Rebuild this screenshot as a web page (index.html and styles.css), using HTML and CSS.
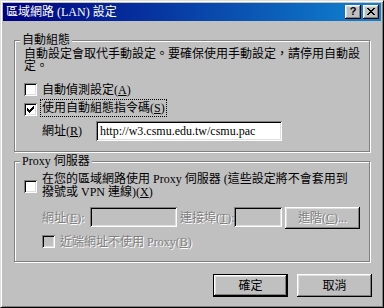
FILE: index.html
```html
<!DOCTYPE html>
<html lang="zh-Hant">
<head>
<meta charset="utf-8">
<title>區域網路 (LAN) 設定</title>
<link rel="stylesheet" href="styles.css">
</head>
<body>
<div class="window">
  <div class="titlebar">
    <span class="title">區域網路 (LAN) 設定</span>
    <div class="tbtns">
      <span class="tbtn help">?</span>
      <span class="tbtn close"><svg width="8" height="7" viewBox="0 0 8 7" shape-rendering="crispEdges"><path fill="#000" d="M0 0h2v1H0zM6 0h2v1H6zM1 1h2v1H1zM5 1h2v1H5zM2 2h4v1H2zM3 3h2v1H3zM2 4h4v1H2zM1 5h2v1H1zM5 5h2v1H5zM0 6h2v1H0zM6 6h2v1H6z"/></svg></span>
    </div>
  </div>
  <div class="content">
    <div class="group g1">
      <div class="legend">自動組態</div>
      <p class="desc">自動設定會取代手動設定。要確保使用手動設定，請停用自動設定。</p>
      <div class="check-row r1"><span class="cb"></span><span class="lbl">自動偵測設定(<u>A</u>)</span></div>
      <div class="check-row r2"><span class="cb"><svg class="tick" width="7" height="7" viewBox="0 0 7 7" shape-rendering="crispEdges"><path fill="#000" d="M6 0h1v1H6zM5 1h2v1H5zM0 2h1v1H0zM4 2h3v1H4zM0 3h2v1H0zM3 3h3v1H3zM0 4h5v1H0zM1 5h3v1H1zM2 6h1v1H2z"/></svg></span><span class="lbl focus">使用自動組態指令碼(<u>S</u>)</span></div>
      <div class="url-row"><span class="field-label">網址(<u>R</u>)</span><div class="input url">http://w3.csmu.edu.tw/csmu.pac</div></div>
    </div>
    <div class="group g2">
      <div class="legend">Proxy 伺服器</div>
      <div class="check-row r3"><span class="cb"></span><span class="lbl wrap">在您的區域網路使用 Proxy 伺服器 (這些設定將不會套用到撥號或 VPN 連線)(<u>X</u>)</span></div>
      <div class="proxy-row">
        <span class="dis lab-addr">網址(<u>E</u>):</span>
        <div class="input dis-input addr"></div>
        <span class="dis lab-port">連接埠(<u>T</u>):</span>
        <div class="input dis-input port"></div>
        <span class="btn adv"><span class="dis">進階(<u>C</u>)...</span></span>
      </div>
      <div class="check-row r4"><span class="cb dis-cb"></span><span class="lbl dis">近端網址不使用 Proxy(<u>B</u>)</span></div>
    </div>
    <div class="actions">
      <span class="btn default">確定</span>
      <span class="btn">取消</span>
    </div>
  </div>
</div>
</body>
</html>
```
FILE: styles.css
```css
html, body {
  margin: 0;
  padding: 0;
  background: #c0c0c0;
  overflow: hidden;
}
body {
  font-family: "Liberation Serif", "Noto Sans CJK TC", serif;
  font-size: 12px;
  line-height: 12px;
  color: #000;
}
u { text-decoration: underline; text-underline-offset: 1px; }

.window {
  width: 384px;
  height: 308px;
  box-sizing: border-box;
  border: 1px solid;
  border-color: #dfdfdf #000 #000 #dfdfdf;
  box-shadow: inset 1px 1px #fff, inset -1px -1px #808080;
  padding: 2px;
  background: #c0c0c0;
  display: flex;
  flex-direction: column;
}

.titlebar {
  height: 18px;
  flex: none;
  background: linear-gradient(90deg, #000080, #1084d0);
  color: #fff;
  display: flex;
  align-items: center;
  justify-content: space-between;
  padding: 0 2px 0 3px;
}
.title { white-space: nowrap; }
.tbtns { display: flex; gap: 2px; }
.tbtn {
  width: 16px;
  height: 14px;
  box-sizing: border-box;
  background: #c0c0c0;
  box-shadow: inset -1px -1px #000, inset 1px 1px #fff, inset -2px -2px #808080, inset 2px 2px #dfdfdf;
  display: flex;
  align-items: center;
  justify-content: center;
  color: #000;
}
.help {
  font: bold 11px/11px "Liberation Sans", sans-serif;
  padding-bottom: 1px;
}
.close svg { margin-top: -1px; }

.content {
  flex: 1;
  padding: 0 11px 0 11px;
  display: flex;
  flex-direction: column;
}

.group {
  border: 1px solid #808080;
  box-shadow: inset 1px 1px #fff, 1px 1px #fff;
  padding: 0 9px;
}
.g1 { margin-top: 19px; padding-bottom: 10px; }
.g2 { margin-top: 9px; padding-bottom: 13px; }

.legend {
  margin: -7px 0 0 -4px;
  padding: 0 2px;
  width: max-content;
  height: 12px;
  background: #c0c0c0;
  white-space: nowrap;
}

.desc {
  margin: 2px 0 0;
  width: 340px;
}

.check-row {
  display: flex;
  align-items: center;
}
.r1 { margin-top: 11px; height: 13px; }
.r2 { margin-top: 7px; height: 13px; }
.r3 { margin-top: 6px; }
.r4 { margin-top: 6px; margin-left: 18px; height: 13px; }

.cb {
  width: 13px;
  height: 13px;
  flex: none;
  box-sizing: border-box;
  background: #fff;
  box-shadow: inset 1px 1px #808080, inset -1px -1px #fff, inset 2px 2px #000, inset -2px -2px #dfdfdf;
  position: relative;
}
.cb .tick { position: absolute; left: 3px; top: 3px; }
.dis-cb { background: #c0c0c0; }

.lbl {
  margin-left: 5px;
  white-space: nowrap;
}
.focus {
  margin-left: 4px;
  padding: 1px;
  line-height: 14px;
  margin-top: -3px;
  outline: 1px dotted #000;
}
.wrap {
  white-space: normal;
  width: 312px;
  line-height: 13px;
}

.url-row {
  display: flex;
  align-items: center;
  margin-top: 5px;
  padding-left: 18px;
}
.field-label { width: 54px; flex: none; }

.input {
  box-sizing: border-box;
  height: 20px;
  background: #fff;
  box-shadow: inset 1px 1px #808080, inset -1px -1px #fff, inset 2px 2px #000, inset -2px -2px #dfdfdf;
  padding: 0 4px;
  line-height: 20px;
  white-space: nowrap;
  overflow: hidden;
}
.url { width: 186px; }
.dis-input { background: #c0c0c0; }

.dis {
  color: #808080;
  text-shadow: 1px 1px 0 #fff;
}

.proxy-row {
  display: flex;
  align-items: center;
  margin-top: 8px;
  padding-left: 18px;
  height: 22px;
}
.lab-addr { width: 48px; flex: none; white-space: nowrap; }
.addr { width: 87px; height: 20px; align-self: flex-start; }
.lab-port { margin-left: 3px; width: 54px; flex: none; white-space: nowrap; }
.port { width: 48px; height: 20px; align-self: flex-start; }

.btn {
  box-sizing: border-box;
  width: 75px;
  height: 23px;
  background: #c0c0c0;
  box-shadow: inset -1px -1px #000, inset 1px 1px #fff, inset -2px -2px #808080, inset 2px 2px #dfdfdf;
  display: flex;
  align-items: center;
  justify-content: center;
  white-space: nowrap;
}
.adv { margin-left: 3px; height: 22px; }
.default {
  border: 1px solid #000;
}

.actions {
  display: flex;
  justify-content: flex-end;
  gap: 9px;
  margin-top: 12px;
  margin-right: -2px;
}
```
